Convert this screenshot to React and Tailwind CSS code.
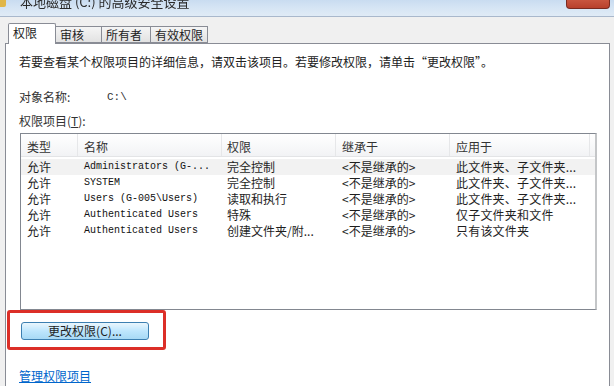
import React from "react";

const CJK = { fontFamily: '"Noto Sans CJK SC", "Noto Sans", sans-serif' };
const MONO = { fontFamily: '"Liberation Mono", "Noto Sans CJK SC", monospace' };

const rows = [
  ["允许", "Administrators (G-...", "完全控制", "<不是继承的>", "此文件夹、子文件夹..."],
  ["允许", "SYSTEM", "完全控制", "<不是继承的>", "此文件夹、子文件夹..."],
  ["允许", "Users (G-005\\Users)", "读取和执行", "<不是继承的>", "此文件夹、子文件夹..."],
  ["允许", "Authenticated Users", "特殊", "<不是继承的>", "仅子文件夹和文件"],
  ["允许", "Authenticated Users", "创建文件夹/附...", "<不是继承的>", "只有该文件夹"],
];

export default function App() {
  return (
    <div
      className="relative w-[614px] h-[386px] overflow-hidden bg-[#f0f0f0] text-[12px] text-[#1e1e1e]"
      style={CJK}
    >
      {/* title bar */}
      <div className="h-[17px] flex items-start border-b border-[#a9b8cc] bg-gradient-to-b from-[#c9dcf0] via-[#d6e5f4] to-[#e0ebf6] overflow-hidden">
        <div className="w-[6px] h-[7px] bg-[#e0b648] rounded-br-[2px]" />
        <div className="ml-[14px] -mt-[6px] leading-4 text-[13px] text-[#2a2a2a] blur-[0.3px] whitespace-nowrap">
          本地磁盘 (C:) 的高级安全设置
        </div>
        <div className="ml-auto mr-[4px] w-[44px] h-[9px] rounded-b-[4px] border border-t-0 border-[#7a2a20] bg-gradient-to-b from-[#c8553f] to-[#b8402c]" />
      </div>

      {/* body */}
      <div className="pl-[5px] pt-[6px]">
        {/* tabs */}
        <div className="flex items-end h-[20px] pl-[3px]">
          <div className="relative z-10 -mb-px w-[48px] h-[21px] bg-white border border-b-0 border-[#898c95] rounded-t-[2px] pl-[4px] leading-[18px]">
            权限
          </div>
          <div className="w-[46px] h-[17px] bg-gradient-to-b from-[#f5f5f5] to-[#e2e2e2] border border-l-0 border-[#898c95] pl-[4px] leading-[16px]">
            审核
          </div>
          <div className="w-[49px] h-[17px] bg-gradient-to-b from-[#f5f5f5] to-[#e2e2e2] border border-l-0 border-[#898c95] pl-[4px] leading-[16px]">
            所有者
          </div>
          <div className="w-[57px] h-[17px] bg-gradient-to-b from-[#f5f5f5] to-[#e2e2e2] border border-l-0 border-[#898c95] pl-[4px] leading-[16px]">
            有效权限
          </div>
        </div>

        {/* panel */}
        <div className="w-[605px] h-[360px] bg-white border border-[#898c95] pl-[13px] flex flex-col items-start">
          <div className="mt-[10px] h-4 leading-4 text-[#222]">
            若要查看某个权限项目的详细信息，请双击该项目。若要修改权限，请单击“更改权限”。
          </div>
          <div className="mt-[19px] h-4 leading-4 flex text-[#333]">
            <span className="w-[88px]">对象名称:</span>
            <span style={MONO} className="text-[11px]">C:\</span>
          </div>
          <div className="mt-[8px] h-4 leading-4 text-[#333]">
            权限项目(<span className="underline">T</span>):
          </div>

          {/* list */}
          <div className="mt-[4px] ml-px w-[577px] h-[177px] border border-[#828790] border-r-2 border-r-[#c4c6c8] bg-white">
            <div className="h-[23px] flex bg-gradient-to-b from-white to-[#f2f3f5] border-b border-[#e3e4e6] text-[#333]">
              <div className="w-[57px] pl-[6px] leading-[26px] border-r border-[#e6e7e9]">类型</div>
              <div className="w-[144px] pl-[6px] leading-[26px] border-r border-[#e6e7e9]">名称</div>
              <div className="w-[114px] pl-[5px] leading-[26px] border-r border-[#e6e7e9]">权限</div>
              <div className="w-[114px] pl-[6px] leading-[26px] border-r border-[#e6e7e9]">继承于</div>
              <div className="w-[140px] pl-[6px] leading-[26px] border-r border-[#e6e7e9]">应用于</div>
            </div>
            <div className="mt-[2px]">
              {rows.map((r, i) => (
                <div
                  key={i}
                  className={`h-4 flex leading-4 w-[574px] ${i === 0 ? "bg-[#f2f2f2]" : ""}`}
                >
                  <div className="w-[57px] pl-[6px]">{r[0]}</div>
                  <div className="w-[144px] pl-[6px] text-[10px] whitespace-pre text-[#111]" style={MONO}>
                    {r[1]}
                  </div>
                  <div className="w-[114px] pl-[5px] whitespace-nowrap">{r[2]}</div>
                  <div className="w-[114px] pl-[6px] whitespace-nowrap">{r[3]}</div>
                  <div className="w-[140px] pl-[6px] whitespace-nowrap tracking-[0.2px]">{r[4]}</div>
                </div>
              ))}
            </div>
          </div>

          {/* button */}
          <div className="mt-[12px] ml-[2px] w-[128px] h-[18px] rounded-[3px] border border-[#3c7fb1] bg-gradient-to-b from-[#eaf6fd] via-[#bee6fd] to-[#a7d9f5] flex items-center justify-center text-[#1e1e1e] leading-4">
            更改权限(C)...
          </div>

          <div className="mt-[28px] h-4 leading-4 text-[#0066cc] underline">管理权限项目</div>
        </div>
      </div>

      {/* red highlight */}
      <div className="absolute left-[7px] top-[310px] w-[159px] h-[40px] border-[3px] border-[#dc2f28] rounded-[3px]" />
    </div>
  );
}
